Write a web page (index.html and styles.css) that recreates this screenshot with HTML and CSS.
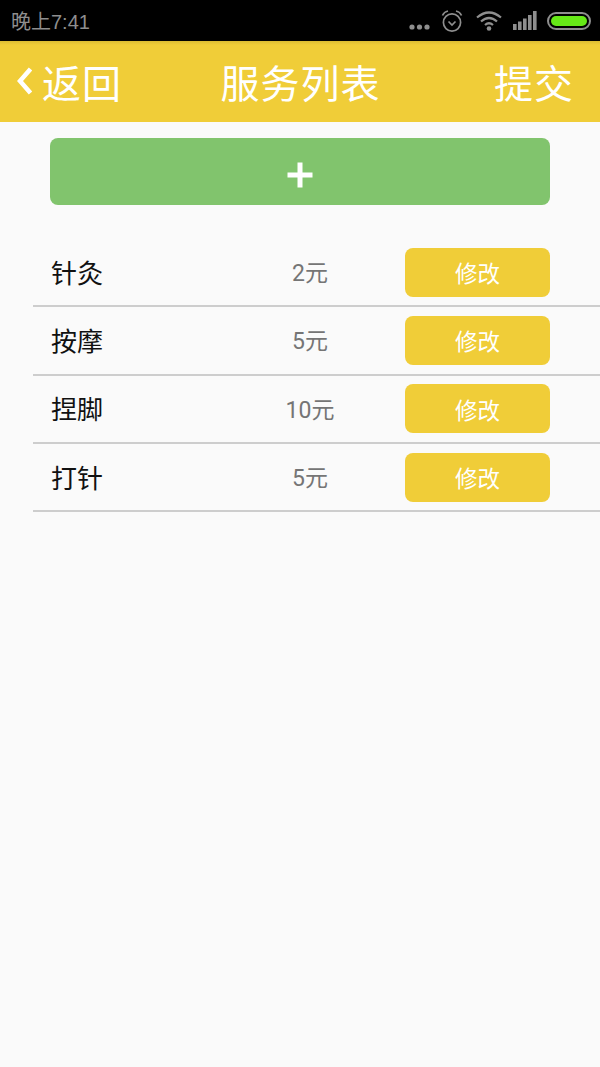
FILE: index.html
```html
<!DOCTYPE html>
<html lang="zh-CN">
<head>
  <meta charset="UTF-8">
  <meta name="viewport" content="width=device-width, initial-scale=1.0">
  <title>服务列表</title>
  <link rel="stylesheet" href="styles.css">
</head>
<body>
  <!-- Status bar -->
  <div class="status-bar">
    <span class="status-time">晚上7:41</span>
    <div class="status-icons">
      <svg class="icon-dots" width="21" height="6" viewBox="0 0 21 6"><circle cx="3" cy="3" r="2.6"/><circle cx="10.5" cy="3" r="2.6"/><circle cx="18" cy="3" r="2.6"/></svg>
      <svg class="icon-alarm" width="22" height="22" viewBox="0 0 22 22">
        <circle cx="11" cy="12.5" r="8.6"/>
        <path d="M7.5 11.5 L11 15 L14.5 11.5"/>
        <path d="M1.5 5.5 Q3 1.8 7 1"/>
        <path d="M15 1 Q19 1.8 20.5 5.5"/>
      </svg>
      <svg class="icon-wifi" width="26" height="21" viewBox="0 0 26 21">
        <path d="M1 7.5 Q13 -2.5 25 7.5"/>
        <path d="M5 11.5 Q13 4.5 21 11.5"/>
        <path d="M9 15 Q13 11.5 17 15"/>
        <circle class="fill" cx="13" cy="18.5" r="2.3"/>
      </svg>
      <svg class="icon-signal" width="24" height="19" viewBox="0 0 24 19">
        <rect x="0" y="13" width="3.6" height="6"/>
        <rect x="5" y="10.5" width="3.6" height="8.5"/>
        <rect x="10" y="7.5" width="3.6" height="11.5"/>
        <rect x="15" y="4" width="3.6" height="15"/>
        <rect x="20" y="0" width="3.6" height="19"/>
      </svg>
      <div class="battery"><div class="battery-level"></div></div>
    </div>
  </div>

  <!-- Header -->
  <div class="header">
    <div class="header-back">
      <svg class="icon-back" width="17" height="30" viewBox="0 0 17 30"><path d="M15.5 3 L5 15 L15.5 27"/></svg>
      <span>返回</span>
    </div>
    <div class="header-title">服务列表</div>
    <div class="header-submit">提交</div>
  </div>

  <div class="content">
    <div class="add-button">
      <svg width="26" height="26" viewBox="0 0 26 26"><path d="M13 0.5 V25.5 M0.5 13 H25.5"/></svg>
    </div>

    <div class="service-list">
      <div class="service-row">
        <span class="service-name">针灸</span>
        <span class="service-price">2元</span>
        <div class="edit-button">修改</div>
      </div>
      <div class="service-row">
        <span class="service-name">按摩</span>
        <span class="service-price">5元</span>
        <div class="edit-button">修改</div>
      </div>
      <div class="service-row">
        <span class="service-name">捏脚</span>
        <span class="service-price">10元</span>
        <div class="edit-button">修改</div>
      </div>
      <div class="service-row">
        <span class="service-name">打针</span>
        <span class="service-price">5元</span>
        <div class="edit-button">修改</div>
      </div>
    </div>
  </div>
</body>
</html>
```

FILE: styles.css
```css
body {
  font-family: Roboto, "Noto Sans CJK SC", sans-serif;
  background: #fafafa;
  margin: 0;
  padding: 0;
  height: 1067px;
  overflow: hidden;
}

.status-bar {
  height: 41px;
  background: #000;
  color: #8e8e8e;
  display: flex;
  align-items: center;
  justify-content: space-between;
  padding: 0 9px 0 11px;
}

.status-time {
  font-size: 20px;
  font-family: "Liberation Sans", "Noto Sans CJK SC", sans-serif;
}

.status-icons {
  display: flex;
  align-items: center;
  gap: 11px;
}

.status-icons svg {
  fill: none;
  stroke: #8e8e8e;
  stroke-width: 1.7;
}

.status-icons .icon-dots,
.status-icons .icon-signal,
.status-icons .fill {
  fill: #8e8e8e;
  stroke: none;
}

.icon-dots {
  margin-top: 13px;
}

.icon-wifi {
  stroke-width: 2.2 !important;
  margin-left: 2px;
}

.battery {
  width: 44px;
  height: 18px;
  border: 2px solid #8e8e8e;
  border-radius: 9px;
  padding: 2px;
  box-sizing: border-box;
  margin-left: -1px;
}

.battery-level {
  height: 100%;
  background: #66e817;
  border-radius: 5px;
}

.header {
  height: 81px;
  box-sizing: border-box;
  padding: 0 26px 2px 15px;
  background: linear-gradient(180deg, #dcbc32 0, #f0cd38 4px);
  color: #fff;
  font-size: 39px;
  letter-spacing: 1px;
  display: flex;
  align-items: center;
  justify-content: space-between;
  position: relative;
}

.header-back {
  display: flex;
  align-items: center;
  gap: 10px;
}

.icon-back {
  fill: none;
  stroke: #fff;
  stroke-width: 4.5;
}

.header-title {
  position: absolute;
  left: 1px;
  right: 0;
  text-align: center;
}

.content {
  padding-top: 16px;
}

.add-button {
  height: 67px;
  margin: 0 50px;
  padding-top: 7px;
  box-sizing: border-box;
  background: #81c46d;
  border-radius: 8px;
  display: flex;
  align-items: center;
  justify-content: center;
}

.add-button svg {
  fill: none;
  stroke: #fff;
  stroke-width: 5;
}

.service-list {
  margin: 34px 0 0 33px;
}

.service-row {
  height: 66.33px;
  border-bottom: 2px solid #cdcdcd;
  display: flex;
  align-items: center;
  padding: 0 50px 0 18px;
}

.service-name {
  width: 200px;
  font-size: 26px;
  color: #111;
  margin-bottom: 2px;
}

.service-price {
  width: 118px;
  margin-right: 36px;
  margin-bottom: 2px;
  font-size: 23px;
  color: #757575;
  text-align: center;
}

.edit-button {
  width: 145px;
  height: 49px;
  background: #f0cd38;
  border-radius: 8px;
  color: #fff;
  font-size: 22.5px;
  display: flex;
  align-items: center;
  justify-content: center;
}
```
